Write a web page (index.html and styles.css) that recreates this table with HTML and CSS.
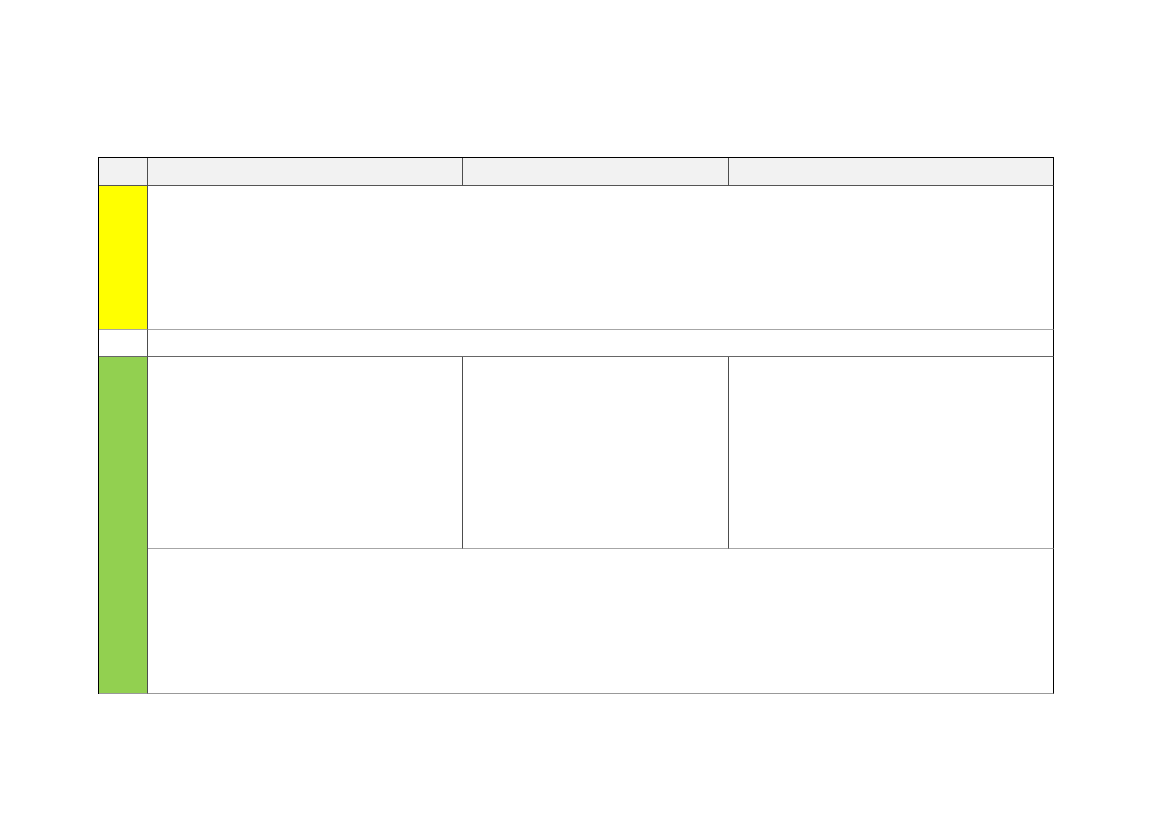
FILE: index.html
```html
<!DOCTYPE html>
<html lang="en">
<head>
    <meta charset="UTF-8">
    <meta name="viewport" content="width=device-width, initial-scale=1.0">
    <title>Table</title>
    <link rel="stylesheet" href="styles.css">
</head>
<body>
    <div class="page">
        <div class="grid">
            <div class="cell head"></div>
            <div class="cell head"></div>
            <div class="cell head"></div>
            <div class="cell head last"></div>

            <div class="cell yellow"></div>
            <div class="cell wide last"></div>

            <div class="cell gap"></div>
            <div class="cell wide gap last"></div>

            <div class="cell green"></div>
            <div class="cell"></div>
            <div class="cell"></div>
            <div class="cell last"></div>
            <div class="cell wide last bottom"></div>
        </div>
    </div>
</body>
</html>
```

FILE: styles.css
```css
* {
    margin: 0;
    padding: 0;
    box-sizing: border-box;
}
body {
    font-family: 'Liberation Sans', Arial, sans-serif;
    background-color: #fff;
}
.page {
    padding: 157px 0 0 98px;
}
.grid {
    display: grid;
    grid-template-columns: 49px 315px 266px 325px;
    grid-template-rows: 28px 144px 27px 192px 145px;
    width: 956px;
    border-top: 1px solid #000;
    border-left: 1px solid #000;
}
.cell {
    border-right: 1px solid #4d4d4d;
    border-bottom: 1px solid #a6a6a6;
}
.head {
    background-color: #f2f2f2;
    border-bottom-color: #555;
}
.gap {
    border-bottom-color: #666;
}
.last {
    border-right-color: #000;
}
.wide {
    grid-column: 2 / 5;
}
.yellow {
    background-color: #ffff00;
}
.green {
    background-color: #92d050;
    grid-row: 4 / 6;
    border-bottom-color: #999;
}
.bottom {
    border-bottom-color: #999;
}
```
